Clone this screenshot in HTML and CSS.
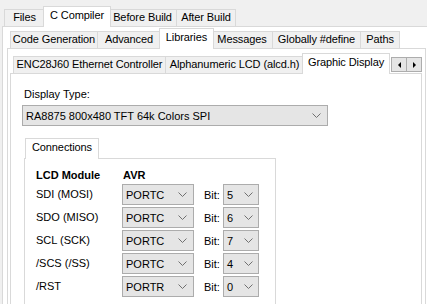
FILE: index.html
```html
<!DOCTYPE html>
<html lang="en">
<head>
    <meta charset="UTF-8">
    <title>Project Configuration</title>
    <link rel="stylesheet" href="styles.css">
</head>
<body>
    <div class="tabctl l1">
        <div class="strip">
            <div class="tab t-files">Files</div>
            <div class="tab sel t-ccomp">C Compiler</div>
            <div class="tab t-before">Before Build</div>
            <div class="tab t-after">After Build</div>
        </div>
        <div class="page">
            <div class="tabctl l2">
                <div class="strip">
                    <div class="tab t-codegen">Code Generation</div>
                    <div class="tab t-adv">Advanced</div>
                    <div class="tab sel t-libs">Libraries</div>
                    <div class="tab t-msgs">Messages</div>
                    <div class="tab t-define">Globally #define</div>
                    <div class="tab t-paths">Paths</div>
                </div>
                <div class="page">
                    <div class="tabctl l3">
                        <div class="strip">
                            <div class="tab t-enc">ENC28J60 Ethernet Controller</div>
                            <div class="tab t-alcd">Alphanumeric LCD (alcd.h)</div>
                            <div class="tab sel t-glcd">Graphic Display</div>
                            <div class="scroller">
                                <span class="scroll-btn left"></span>
                                <span class="scroll-btn right"></span>
                            </div>
                        </div>
                        <div class="page display-page">
                            <div class="field-label">Display Type:</div>
                            <div class="combo display-type">
                                <span>RA8875 800x480 TFT 64k Colors SPI</span>
                                <svg class="chev" width="9" height="5" viewBox="0 0 9 5"><polyline points="0.5,0.5 4.5,4.5 8.5,0.5" fill="none" stroke="#707070"/></svg>
                            </div>

                            <div class="tabctl conn">
                                <div class="strip">
                                    <div class="tab sel t-conn">Connections</div>
                                </div>
                                <div class="page conn-page">
                                    <div class="conn-grid">
                                        <div class="head">LCD Module</div>
                                        <div class="head span">AVR</div>

                                        <div class="pin">SDI (MOSI)</div>
                                        <div class="combo port"><span>PORTC</span><svg class="chev" width="9" height="5" viewBox="0 0 9 5"><polyline points="0.5,0.5 4.5,4.5 8.5,0.5" fill="none" stroke="#707070"/></svg></div>
                                        <div class="bit-label">Bit:</div>
                                        <div class="combo bit"><span>5</span><svg class="chev" width="9" height="5" viewBox="0 0 9 5"><polyline points="0.5,0.5 4.5,4.5 8.5,0.5" fill="none" stroke="#707070"/></svg></div>

                                        <div class="pin">SDO (MISO)</div>
                                        <div class="combo port"><span>PORTC</span><svg class="chev" width="9" height="5" viewBox="0 0 9 5"><polyline points="0.5,0.5 4.5,4.5 8.5,0.5" fill="none" stroke="#707070"/></svg></div>
                                        <div class="bit-label">Bit:</div>
                                        <div class="combo bit"><span>6</span><svg class="chev" width="9" height="5" viewBox="0 0 9 5"><polyline points="0.5,0.5 4.5,4.5 8.5,0.5" fill="none" stroke="#707070"/></svg></div>

                                        <div class="pin">SCL (SCK)</div>
                                        <div class="combo port"><span>PORTC</span><svg class="chev" width="9" height="5" viewBox="0 0 9 5"><polyline points="0.5,0.5 4.5,4.5 8.5,0.5" fill="none" stroke="#707070"/></svg></div>
                                        <div class="bit-label">Bit:</div>
                                        <div class="combo bit"><span>7</span><svg class="chev" width="9" height="5" viewBox="0 0 9 5"><polyline points="0.5,0.5 4.5,4.5 8.5,0.5" fill="none" stroke="#707070"/></svg></div>

                                        <div class="pin">/SCS (/SS)</div>
                                        <div class="combo port"><span>PORTC</span><svg class="chev" width="9" height="5" viewBox="0 0 9 5"><polyline points="0.5,0.5 4.5,4.5 8.5,0.5" fill="none" stroke="#707070"/></svg></div>
                                        <div class="bit-label">Bit:</div>
                                        <div class="combo bit"><span>4</span><svg class="chev" width="9" height="5" viewBox="0 0 9 5"><polyline points="0.5,0.5 4.5,4.5 8.5,0.5" fill="none" stroke="#707070"/></svg></div>

                                        <div class="pin">/RST</div>
                                        <div class="combo port"><span>PORTR</span><svg class="chev" width="9" height="5" viewBox="0 0 9 5"><polyline points="0.5,0.5 4.5,4.5 8.5,0.5" fill="none" stroke="#707070"/></svg></div>
                                        <div class="bit-label">Bit:</div>
                                        <div class="combo bit"><span>0</span><svg class="chev" width="9" height="5" viewBox="0 0 9 5"><polyline points="0.5,0.5 4.5,4.5 8.5,0.5" fill="none" stroke="#707070"/></svg></div>
                                    </div>
                                </div>
                            </div>
                        </div>
                    </div>
                </div>
            </div>
        </div>
    </div>
</body>
</html>
```

FILE: styles.css
```css
body {
    margin: 0;
    height: 304px;
    overflow: hidden;
    background-color: #f0f0f0;
    font-family: 'Liberation Sans', Arial, sans-serif;
    font-size: 11px;
    color: #000;
}

/* generic tab control */
.tabctl {
    display: flex;
    flex-direction: column;
}
.strip {
    display: flex;
    align-items: flex-end;
    position: relative;
    z-index: 1;
}
.tab {
    box-sizing: border-box;
    flex: none;
    height: 17px;
    padding-top: 1px;
    line-height: 13px;
    text-align: center;
    border: 1px solid #d9d9d9;
    border-bottom: none;
    background-color: #f0f0f0;
    margin-left: -1px;
    white-space: nowrap;
    letter-spacing: -0.1px;
}
.tab:first-child {
    margin-left: 0;
}
.tab.sel {
    height: 21px;
    padding-top: 2px;
    background-color: #fff;
    margin: 0 -2px -1px -2px;
    position: relative;
    z-index: 2;
}
.page {
    border: 1px solid #d9d9d9;
    background-color: #fff;
}

/* tab widths, measured off the real dialog */
.t-files { width: 41px; }
.t-ccomp { width: 68px; }
.t-before { width: 69px; }
.t-after { width: 60px; }
.t-codegen { width: 88px; }
.t-adv { width: 64px; }
.t-libs { width: 55px; }
.t-msgs { width: 62px; }
.t-define { width: 89px; }
.t-paths { width: 40px; }
.t-enc { width: 153px; }
.t-alcd { width: 139px; }
.t-glcd { width: 88px; }
.t-conn { width: 74px; }

/* level 1 */
.l1 {
    margin: 6px -3px 0 2px;
}
.l1 > .strip {
    padding-left: 2px;
}
.l1 > .page {
    height: 400px;
    padding: 1px 3px 0 4px;
}

/* level 2 */
.l2 > .strip {
    padding-left: 3px;
}
.l2 > .page {
    height: 400px;
    padding: 4px 3px 0 2px;
}

/* level 3 */
.l3 > .strip {
    padding-left: 3px;
}
.scroller {
    display: flex;
    margin-left: auto;
    margin-bottom: 1px;
}
.scroll-btn {
    box-sizing: border-box;
    width: 16px;
    height: 15px;
    border: 1px solid #adadad;
    background-color: #e5e5e5;
    display: flex;
    align-items: center;
    justify-content: center;
}
.scroll-btn + .scroll-btn {
    width: 15px;
    border-left: none;
}
.scroll-btn::before {
    content: '';
    border-top: 3px solid transparent;
    border-bottom: 3px solid transparent;
}
.scroll-btn.left::before {
    border-right: 3px solid #000;
}
.scroll-btn.right::before {
    border-left: 3px solid #000;
}

.display-page {
    height: 400px;
    padding: 14px 0 0 11px;
}
.field-label {
    line-height: 13px;
    margin-left: 2px;
}

/* combobox look */
.combo {
    box-sizing: border-box;
    height: 21px;
    border: 1px solid #acacac;
    background-color: #e5e5e5;
    display: flex;
    align-items: center;
    justify-content: space-between;
    padding: 0 6px 0 3px;
}
.display-type {
    width: 306px;
    margin-top: 4px;
}

/* connections group */
.conn {
    margin: 12px 0 0 2px;
    width: 252px;
}
.conn > .strip {
    padding-left: 1px;
}
.conn .tab.sel {
    margin-left: 0;
}
.conn-page {
    height: 200px;
    padding: 10px 0 0 11px;
}
.conn-grid {
    display: grid;
    grid-template-columns: 86px 72px 29px 36px;
    grid-template-rows: 13px;
    grid-auto-rows: 21px;
    row-gap: 2px;
    align-items: center;
}
.head {
    font-weight: bold;
    line-height: 13px;
}
.head.span {
    grid-column: 2 / 5;
    margin-left: 1px;
}
.pin {
    line-height: 13px;
}
.bit-label {
    padding-left: 10px;
}
.bit {
    padding-right: 5px;
}
```
